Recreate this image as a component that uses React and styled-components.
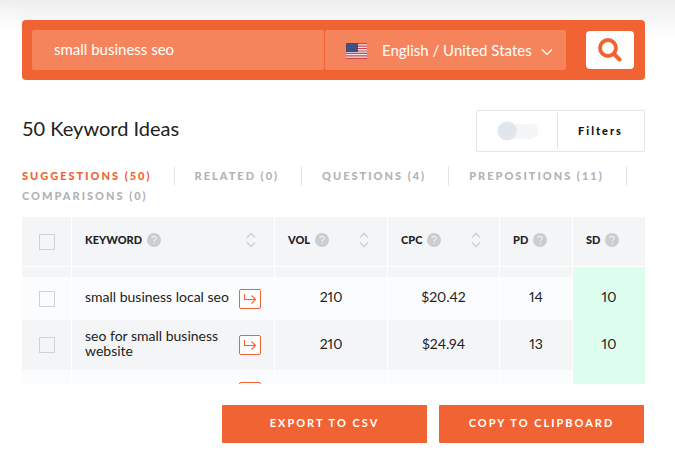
import React, { useState } from "react";
import styled, { createGlobalStyle } from "styled-components";

const orange = "#f26334";
const line = "#e2e6ea";

const GlobalStyle = createGlobalStyle`
  *, *::before, *::after { box-sizing: border-box; }
  body { margin: 0; background: #fff; }
  body, button, input, select { font-family: Lato, "Open Sans", sans-serif; }
`;

const Page = styled.main`
  padding: 20px 30px 19px 22px;
  color: #222;
  background:
    radial-gradient(ellipse 40px 40px at 0 40px, #fff, rgba(255, 255, 255, 0)) no-repeat 0 0 / 100% 40px,
    linear-gradient(to bottom, #eeeeee, #fff) no-repeat 0 0 / 100% 40px,
    #fff;
`;

const SearchBar = styled.form`
  display: flex;
  align-items: center;
  padding: 10px;
  border-radius: 4px;
  background: ${orange};
`;

const SearchInput = styled.input`
  flex: 1;
  min-width: 0;
  height: 40px;
  padding: 0 22px 2px;
  border: 0;
  border-radius: 2px;
  outline: 0;
  background: #f5845d;
  color: #fff;
  font-size: 15px;
`;

const LocaleField = styled.label`
  position: relative;
  display: flex;
  width: 241px;
  margin: 0 20px 0 1px;
`;

const LocaleSelect = styled.select`
  appearance: none;
  width: 100%;
  height: 40px;
  padding: 0 28px 0 57px;
  border: 0;
  border-radius: 2px;
  background: #f5845d;
  color: #fff;
  font-size: 15px;
`;

const Flag = styled.svg`
  position: absolute;
  left: 21px;
  top: 13px;
  pointer-events: none;
`;

const Chevron = styled.svg`
  position: absolute;
  right: 13px;
  top: 18px;
  pointer-events: none;
`;

const SearchButton = styled.button`
  display: flex;
  align-items: center;
  justify-content: center;
  width: 48px;
  height: 38px;
  margin-right: 1px;
  padding: 0;
  border: 0;
  border-radius: 4px;
  background: #fff;
`;

const Heading = styled.header`
  display: flex;
  align-items: center;
  justify-content: space-between;
  margin-top: 30px;
`;

const Title = styled.h1`
  margin: 0;
  padding-bottom: 6px;
  font-size: 20px;
  line-height: 24px;
  font-weight: 400;
`;

const FilterBox = styled.div`
  display: flex;
  align-items: center;
  height: 42px;
  border: 1px solid ${line};
  border-radius: 2px;
`;

const Toggle = styled.input`
  appearance: none;
  width: 42px;
  height: 20px;
  margin: 0 18px 0 20px;
  border-radius: 10px;
  background:
    radial-gradient(circle at 10px 10px, #e0e6eb 9px, transparent 10px),
    linear-gradient(#f4f5f7, #f4f5f7) no-repeat 8px 3px / 26px 15px,
    radial-gradient(circle at 34px 10px, #f4f5f7 7px, transparent 8px);
  &:checked { transform: rotate(180deg); }
`;

const FilterButton = styled.button`
  height: 36px;
  padding: 0 21px 2px 20px;
  border: 0;
  border-left: 1px solid ${line};
  background: none;
  color: #111;
  font-size: 11px;
  font-weight: 900;
  letter-spacing: 2px;
`;

const Tabs = styled.nav`
  display: flex;
  flex-wrap: wrap;
  margin: 14px -12px 0 0;
`;

const Tab = styled.button`
  display: flex;
  height: 20px;
  padding: 0;
  align-items: center;
  border: 0;
  background: none;
  color: ${(p) => (p.$active ? orange : "#b1b3b6")};
  font-size: 11px;
  line-height: 18px;
  font-weight: 900;
  letter-spacing: 2px;
  white-space: nowrap;
  &:not(:last-child) {
    margin-right: 20px;
  }
  &:not(:last-child)::after {
    content: "";
    width: 1px;
    height: 20px;
    margin-left: 22px;
    background: ${line};
  }
`;

const TableFrame = styled.div`
  max-height: 167px;
  margin-top: 11px;
  overflow: hidden;
`;

const Table = styled.table`
  width: 100%;
  table-layout: fixed;
  border-collapse: separate;
  border-spacing: 0;
`;

const Col = styled.col`
  width: ${(p) => p.$width || "auto"};
`;

const HeadCell = styled.th`
  height: 50px;
  padding: ${(p) => (p.$check ? "0" : "0 18px 4px 13px")};
  border-right: ${(p) => (p.$last ? "0" : "1px solid #fff")};
  border-bottom: 1px solid #fff;
  background: #f4f5f7;
  text-align: left;
  font-size: 11px;
  font-weight: 900;
`;

const HeadContent = styled.div`
  display: flex;
  align-items: center;
  gap: 5px;
`;

const SortButton = styled.button`
  display: flex;
  margin-left: auto;
  padding: 0;
  border: 0;
  background: none;
`;

const HelpIcon = styled.svg`
  flex: none;
`;

const Row = styled.tr`
  height: ${(p) => p.$height};
  background: ${(p) => (p.$shaded ? "#f4f5f7" : "#fbfcfe")};
`;

const Cell = styled.td`
  padding: ${(p) => (p.$metric ? "0 0 4px" : "0")};
  border-right: ${(p) => (p.$score ? "0" : "1px solid #fff")};
  background: ${(p) => (p.$score ? "#ddfdef" : "transparent")};
  text-align: center;
  font-size: 14px;
  line-height: 15px;
  font-variant-numeric: proportional-nums;
`;

const KeywordContent = styled.div`
  display: flex;
  align-items: center;
  justify-content: space-between;
  padding: 0 13px;
  text-align: left;
`;

const Keyword = styled.span`
  padding-bottom: 4px;
`;

const OpenButton = styled.button`
  display: flex;
  flex: none;
  align-items: center;
  justify-content: center;
  width: 22px;
  height: 20px;
  padding: 0;
  border: 1px solid ${orange};
  border-radius: 2px;
  background: #fff;
`;

const CheckBox = styled.input`
  appearance: none;
  display: block;
  width: 16px;
  height: 16px;
  margin: 0 auto;
  border: 1px solid #cfd1d3;
  background: ${(p) => (p.checked ? orange : "transparent")};
`;

const Actions = styled.footer`
  display: flex;
  justify-content: flex-end;
  gap: 12px;
  margin-top: 21px;
  padding-right: 1px;
`;

const ActionButton = styled.button`
  width: 205px;
  height: 38px;
  padding: 0 0 3px;
  border: 0;
  border-radius: 1px;
  background: ${orange};
  color: #fff;
  font-size: 11px;
  font-weight: 700;
  letter-spacing: 2px;
`;

const tabs = ["SUGGESTIONS (50)", "RELATED (0)", "QUESTIONS (4)", "PREPOSITIONS (11)", "COMPARISONS (0)"];

const columns = [
  { label: "KEYWORD", sortable: true },
  { label: "VOL", sortable: true, width: "113px" },
  { label: "CPC", sortable: true, width: "112px" },
  { label: "PD", width: "73px" },
  { label: "SD", width: "72px" },
];

const rows = [
  { height: "10px", shaded: true },
  { height: "43px", keyword: "small business local seo", metrics: ["210", "$20.42", "14"], sd: "10" },
  { height: "50px", shaded: true, keyword: "seo for small business website", metrics: ["210", "$24.94", "13"], sd: "10" },
  { height: "43px", keyword: " " },
];

function UsFlag() {
  return (
    <Flag width="21" height="16" viewBox="0 0 21 16" aria-hidden="true">
      <path fill="#f7e9e8" d="M0 0h21v16H0z" />
      <path stroke="#c4464e" strokeWidth="1.2" d="M0 .6h21M0 3.1h21M0 5.5h21M0 8h21M0 10.4h21M0 12.9h21M0 15.4h21" />
      <path fill="#3b4e7c" d="M0 0h12v9H0z" />
      <path stroke="#566890" strokeWidth=".7" strokeDasharray="1 1" d="M1 2h10M2 4.5h9M1 7h10" />
    </Flag>
  );
}

function Help() {
  return (
    <HelpIcon width="14" height="14" viewBox="0 0 14 14" role="img" aria-label="Help">
      <circle cx="7" cy="7" r="7" fill="#cbcccd" />
      <path d="M4.9 5.4c0-2.9 4.3-2.8 4.3-.1C9.2 6.9 7.1 6.9 7.1 8.6" fill="none" stroke="#f4f5f7" strokeWidth="1.1" />
      <path d="M7.1 9.7v1.3" stroke="#f4f5f7" strokeWidth="1.2" />
    </HelpIcon>
  );
}

export default function App() {
  const [term, setTerm] = useState("small business seo");
  const [active, setActive] = useState(0);
  const [filtersOn, setFiltersOn] = useState(false);
  const [checked, setChecked] = useState({});
  const toggle = (i) => setChecked({ ...checked, [i]: !checked[i] });

  return (
    <>
      <GlobalStyle />
      <Page>
        <SearchBar onSubmit={(e) => e.preventDefault()}>
          <SearchInput aria-label="Keyword" value={term} onChange={(e) => setTerm(e.target.value)} />
          <LocaleField>
            <LocaleSelect aria-label="Language and country">
              <option>English / United States</option>
            </LocaleSelect>
            <UsFlag />
            <Chevron width="12" height="8" viewBox="0 0 12 8" aria-hidden="true">
              <path d="M1 1.5 6 6.5 11 1.5" fill="none" stroke="#fff" strokeWidth="1.2" />
            </Chevron>
          </LocaleField>
          <SearchButton aria-label="Search">
            <svg width="24" height="24" viewBox="0 0 24 24" fill="none" stroke={orange} aria-hidden="true">
              <circle cx="10" cy="10" r="8" strokeWidth="3.8" />
              <path d="M16 16 21.5 21.5" strokeWidth="4" strokeLinecap="round" />
            </svg>
          </SearchButton>
        </SearchBar>

        <Heading>
          <Title>50 Keyword Ideas</Title>
          <FilterBox>
            <Toggle
              type="checkbox"
              role="switch"
              aria-label="Filters"
              checked={filtersOn}
              onChange={() => setFiltersOn(!filtersOn)}
            />
            <FilterButton>Filters</FilterButton>
          </FilterBox>
        </Heading>

        <Tabs>
          {tabs.map((t, i) => (
            <Tab key={t} $active={i === active} onClick={() => setActive(i)}>{t}</Tab>
          ))}
        </Tabs>

        <TableFrame>
          <Table>
            <colgroup>
              <Col $width="50px" />
              {columns.map((c) => <Col key={c.label} $width={c.width} />)}
            </colgroup>
            <thead>
              <tr>
                <HeadCell $check>
                  <CheckBox type="checkbox" aria-label="Select all" checked={!!checked.all} onChange={() => toggle("all")} />
                </HeadCell>
                {columns.map((c) => (
                  <HeadCell key={c.label} $last={c.label === "SD"}>
                    <HeadContent>
                      {c.label}
                      <Help />
                      {c.sortable && (
                        <SortButton aria-label={`Sort by ${c.label}`}>
                          <svg width="10" height="16" viewBox="0 0 10 16" fill="none" stroke="#cfd1d3" strokeWidth="1.5" aria-hidden="true">
                            <path d="M1 5.5 5 1.5 9 5.5M1 10.5 5 14.5 9 10.5" />
                          </svg>
                        </SortButton>
                      )}
                    </HeadContent>
                  </HeadCell>
                ))}
              </tr>
            </thead>
            <tbody>
              {rows.map((r, i) => (
                <Row key={i} $height={r.height} $shaded={r.shaded}>
                  <Cell>
                    {r.keyword && (
                      <CheckBox type="checkbox" aria-label="Select row" checked={!!checked[i]} onChange={() => toggle(i)} />
                    )}
                  </Cell>
                  <Cell>
                    {r.keyword && (
                      <KeywordContent>
                        <Keyword>{r.keyword}</Keyword>
                        <OpenButton aria-label="Open keyword">
                          <svg width="14" height="12" viewBox="0 0 14 12" fill="none" stroke={orange} strokeWidth="1.1" aria-hidden="true">
                            <path d="M1.5 1v5.5h11M8.5 2.5l4 4-4 4" />
                          </svg>
                        </OpenButton>
                      </KeywordContent>
                    )}
                  </Cell>
                  {(r.metrics || ["", "", ""]).map((m, k) => <Cell key={k} $metric={!!r.keyword}>{m}</Cell>)}
                  <Cell $score $metric={!!r.keyword}>{r.sd}</Cell>
                </Row>
              ))}
            </tbody>
          </Table>
        </TableFrame>

        <Actions>
          <ActionButton>EXPORT TO CSV</ActionButton>
          <ActionButton>COPY TO CLIPBOARD</ActionButton>
        </Actions>
      </Page>
    </>
  );
}
